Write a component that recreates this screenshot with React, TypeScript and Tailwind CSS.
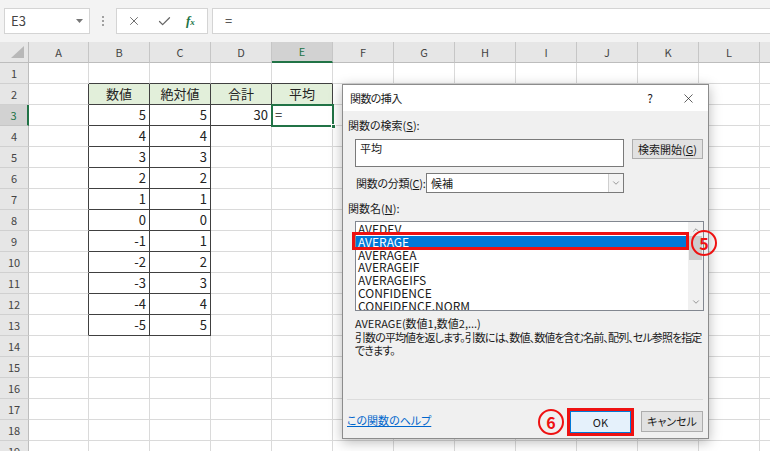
import { X, Check, ChevronDown, ChevronUp } from "lucide-react";

const cols = ["A", "B", "C", "D", "E", "F", "G", "H", "I", "J", "K", "L", "M"];
const rows = Array.from({ length: 19 }, (_, i) => i + 1);

const colB = ["5", "4", "3", "2", "1", "0", "-1", "-2", "-3", "-4", "-5"];
const colC = ["5", "4", "3", "2", "1", "0", "1", "2", "3", "4", "5"];

const cells: Record<string, string> = {
  B2: "数値",
  C2: "絶対値",
  D2: "合計",
  E2: "平均",
  D3: "30",
  E3: "=",
};
colB.forEach((v, i) => (cells[`B${i + 3}`] = v));
colC.forEach((v, i) => (cells[`C${i + 3}`] = v));

// table area with dark borders
function bordered(r: number, c: number) {
  if ((r === 2 || r === 3) && c >= 1 && c <= 4) return true;
  return r >= 4 && r <= 13 && c >= 1 && c <= 2;
}

const functions = [
  "AVEDEV",
  "AVERAGE",
  "AVERAGEA",
  "AVERAGEIF",
  "AVERAGEIFS",
  "CONFIDENCE",
  "CONFIDENCE.NORM",
];

function Toolbar() {
  return (
    <div className="flex h-[42px] items-center bg-[#f3f3f3] pl-[4px]">
      <div className="flex h-[26px] w-[86px] items-center justify-between border border-[#d4d4d4] bg-white pl-[6px] pr-[6px] text-[13px] text-[#444]">
        <span>E3</span>
        <svg width="7" height="4" viewBox="0 0 7 4">
          <polygon points="0,0 7,0 3.5,4" fill="#777" />
        </svg>
      </div>
      <div className="flex w-[26px] flex-col items-center gap-[2px]">
        <span className="h-[2px] w-[2px] bg-[#a0a0a0]" />
        <span className="h-[2px] w-[2px] bg-[#a0a0a0]" />
        <span className="h-[2px] w-[2px] bg-[#a0a0a0]" />
      </div>
      <div className="flex h-[26px] w-[92px] items-center border border-[#d4d4d4] bg-white pl-[10px] text-[#666]">
        <X size={14} strokeWidth={1.6} />
        <Check size={15} strokeWidth={2} className="ml-[16px]" />
        <span className="ml-[14px] font-['Liberation_Serif',serif] text-[13px] font-bold italic text-[#217346]">
          f<span className="text-[9px]">x</span>
        </span>
      </div>
      <div className="ml-[4px] flex h-[26px] flex-1 items-center border border-r-0 border-[#d4d4d4] bg-white pl-[12px] text-[13px] text-[#333]">
        =
      </div>
    </div>
  );
}

function Sheet() {
  return (
    <div className="grid grid-cols-[29px_60px_repeat(12,61px)]">
      <div className="flex h-[21px] items-end justify-end border-b border-r border-[#bdbdbd] bg-[#e6e6e6] pb-[4px] pr-[4px]">
        <svg width="13" height="12" viewBox="0 0 13 12">
          <polygon points="13,0 13,12 0,12" fill="#b8b8b8" />
        </svg>
      </div>
      {cols.map((c) =>
        c === "E" ? (
          <div
            key={c}
            className="flex h-[21px] items-center justify-center border-b-2 border-r border-b-[#217346] border-r-[#c6c6c6] bg-[#d2d2d2] text-[11px] text-[#217346]"
          >
            {c}
          </div>
        ) : (
          <div
            key={c}
            className="flex h-[21px] items-center justify-center border-b border-r border-b-[#bdbdbd] border-r-[#c6c6c6] bg-[#e6e6e6] text-[11px] text-[#444]"
          >
            {c}
          </div>
        )
      )}
      {rows.map((r) => (
        <Row key={r} r={r} />
      ))}
    </div>
  );
}

function Row({ r }: { r: number }) {
  return (
    <>
      {r === 3 ? (
        <div className="flex h-[21px] items-center justify-center border-b border-r-2 border-b-[#c6c6c6] border-r-[#217346] bg-[#d2d2d2] text-[11px] text-[#217346]">
          {r}
        </div>
      ) : (
        <div className="flex h-[21px] items-center justify-center border-b border-r border-b-[#d0d0d0] border-r-[#bdbdbd] bg-[#e6e6e6] text-[11px] text-[#444]">
          {r}
        </div>
      )}
      {cols.map((c, ci) => {
        const key = `${c}${r}`;
        const v = cells[key];
        const right =
          bordered(r, ci) || bordered(r, ci + 1) ? "border-r-[#404040]" : "border-r-[#dadada]";
        const bottom =
          bordered(r, ci) || bordered(r + 1, ci) ? "border-b-[#404040]" : "border-b-[#dadada]";
        const bg = r === 2 && ci >= 1 && ci <= 4 ? "bg-[#e2efda]" : "bg-white";
        const align =
          r === 2 ? "justify-center" : key === "E3" ? "justify-start pl-[3px]" : "justify-end pr-[3px]";
        return (
          <div
            key={key}
            className={`flex h-[21px] items-center border-b border-r text-[13px] text-[#222] ${right} ${bottom} ${bg} ${align}`}
          >
            {v}
          </div>
        );
      })}
    </>
  );
}

function Dialog() {
  return (
    <div className="absolute left-[342px] top-[84px] flex h-[355px] w-[367px] flex-col border border-[#8c8c8c] bg-[#f0f0f0] text-[11px] text-[#1a1a1a] shadow-[0_3px_12px_rgba(0,0,0,0.28)] [font-feature-settings:'palt']">
      <div className="flex h-[26px] items-center bg-white pl-[7px] pr-[12px]">
        <span className="tracking-[-0.6px]">関数の挿入</span>
        <span className="ml-auto text-[12px]">?</span>
        <X size={15} strokeWidth={1.1} className="ml-[28px]" />
      </div>
      <div className="flex flex-col whitespace-nowrap pl-[5px]">
        <div className="mt-[7px] h-[14px] leading-[14px]">
          関数の検索(<span className="underline">S</span>):
        </div>
        <div className="mt-[7px] flex items-start">
          <div className="ml-[7px] h-[28px] w-[269px] border border-[#7a7a7a] bg-white pl-[4px] pt-[1px] leading-[14px]">
            平均
          </div>
          <div className="ml-[8px] flex h-[20px] w-[71px] items-center justify-center border border-[#adadad] bg-[#e1e1e1]">
            検索開始(<span className="underline">G</span>)
          </div>
        </div>
        <div className="mt-[6px] flex w-[276px] items-center">
          <div className="ml-[8px] tracking-[-0.3px]">
            関数の分類(<span className="underline">C</span>):
          </div>
          <div className="ml-auto flex h-[20px] w-[198px] items-center border border-[#7a7a7a] bg-white">
            <span className="flex-1 pl-[4px]">候補</span>
            <div className="flex h-full w-[15px] items-center justify-center border-l border-[#cfcfcf] bg-[#f3f3f3]">
              <ChevronDown size={10} strokeWidth={1.5} className="text-[#606060]" />
            </div>
          </div>
        </div>
        <div className="mt-[8px] h-[14px] leading-[14px]">
          関数名(<span className="underline">N</span>):
        </div>
        <div className="ml-[7px] mt-[6px] flex h-[90px] w-[349px] border border-[#828790] bg-white text-[12px]">
          <div className="flex-1 overflow-hidden pt-[1px]">
            {functions.map((f) =>
              f === "AVERAGE" ? (
                <div key={f} className="h-[12.8px] bg-[#0078d7] pl-[2px] leading-[12.8px] text-white">
                  {f}
                </div>
              ) : (
                <div key={f} className="h-[12.8px] pl-[2px] leading-[12.8px]">
                  {f}
                </div>
              )
            )}
          </div>
          <div className="flex w-[15px] flex-col items-center bg-[#f0f0f0]">
            <ChevronUp size={10} strokeWidth={1.5} className="mt-[3px] text-[#606060]" />
            <div className="mt-[1px] h-[24px] w-[13px] bg-[#cdcdcd]" />
            <ChevronDown size={10} strokeWidth={1.5} className="mb-[3px] mt-auto text-[#606060]" />
          </div>
        </div>
        <div className="ml-[7px] mt-[5px] h-[14px] leading-[14px]">AVERAGE(数値1,数値2,...)</div>
        <div className="ml-[7px] mt-[1px] leading-[13px] tracking-[-0.9px]">
          <div>引数の平均値を返します。引数には、数値、数値を含む名前、配列、セル参照を指定</div>
          <div>できます。</div>
        </div>
      </div>
      <div className="ml-[4px] mr-[5px] mt-auto flex h-[39px] items-start border-t border-[#dcdcdc]">
        <a className="mt-[13px] leading-[14px] text-[#0066cc] underline">この関数のヘルプ</a>
        <div className="ml-auto mt-[11px] flex h-[22px] w-[61px] items-center justify-center border border-[#0078d7] bg-[#e5f1fb]">
          OK
        </div>
        <div className="ml-[10px] mt-[11px] flex h-[21px] w-[62px] items-center justify-center border border-[#adadad] bg-[#e1e1e1]">
          キャンセル
        </div>
      </div>
    </div>
  );
}

export default function App() {
  return (
    <div className="relative h-[451px] w-[770px] overflow-hidden bg-white font-['Noto_Sans_CJK_JP','Noto_Sans',sans-serif]">
      <Toolbar />
      <Sheet />
      {/* active cell E3 */}
      <div className="absolute left-[271px] top-[104px] h-[23px] w-[63px] border-2 border-[#217346]" />
      <div className="absolute left-[331px] top-[124px] h-[5px] w-[5px] border border-white bg-[#217346]" />
      <Dialog />
      {/* annotations */}
      <div className="absolute left-[352px] top-[232px] h-[18px] w-[337px] border-[3px] border-[#ee1111]" />
      <div className="absolute left-[691px] top-[230px] flex h-[26px] w-[26px] items-center justify-center rounded-full border-2 border-[#ee1111] text-[16px] font-bold text-[#ee1111]">
        5
      </div>
      <div className="absolute left-[567px] top-[408px] h-[28px] w-[67px] border-[3px] border-[#ee1111]" />
      <div className="absolute left-[538px] top-[409px] flex h-[26px] w-[26px] items-center justify-center rounded-full border-2 border-[#ee1111] text-[16px] font-bold text-[#ee1111]">
        6
      </div>
    </div>
  );
}
